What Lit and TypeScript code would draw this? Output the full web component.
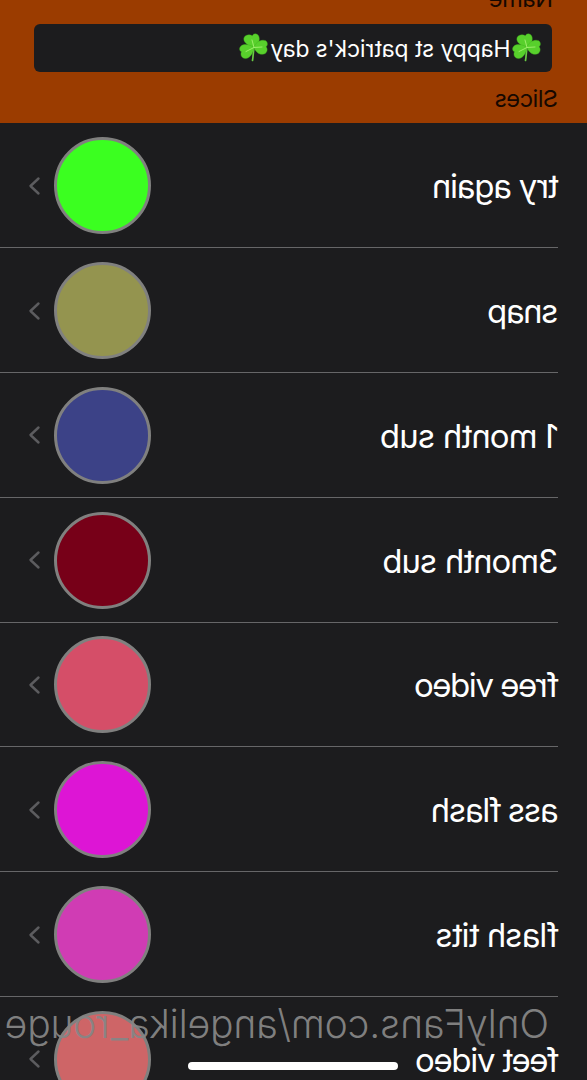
import { LitElement, html, css } from "lit";
import { customElement, property } from "lit/decorators.js";

interface Slice { label: string; color: string; spacing: number; }

const SLICES: Slice[] = [
  { label: "try again", color: "#3bff20", spacing: -1.2 },
  { label: "snap", color: "#94944f", spacing: -1.4 },
  { label: "1 month sub", color: "#3c4287", spacing: -0.9 },
  { label: "3month sub", color: "#770018", spacing: -1 },
  { label: "free video", color: "#d54e68", spacing: -1.45 },
  { label: "ass flash", color: "#dd15d5", spacing: -1.3 },
  { label: "flash tits", color: "#d03cb4", spacing: -0.95 },
  { label: "feet video", color: "#ce6567", spacing: -1.35 },
];

@customElement("shamrock-icon")
class ShamrockIcon extends LitElement {
  static styles = css`
    :host { display: block; width: 29px; height: 29px; flex: none; }
    svg { display: block; width: 100%; height: 100%; }
  `;
  render() {
    return html`<svg viewBox="0 0 29 29">
      <path d="M14 14.5C14.8 19 14.7 23 15.500 27.500" fill="none" stroke="#6acb45" stroke-width="1.700" stroke-linecap="round"/>
      <g fill="#58d02c" stroke="#3fb01e" stroke-width=".4">
        <path d="M14 14.500C10 12.500 7.500 7 9.300 3C11 .1 14.500 0 15.700 2.800C18 1.200 22.500 1.500 24 4.800C25.300 9.500 19.500 13 14 14.500Z"/>
        <path d="M14 14.500C12.500 8.500 6 6 2.200 7.800C0 9.500 .2 12.500 2 13.800C-.2 16 .8 20 4 21C8.500 22.300 12.500 19 14 14.500Z"/>
        <path d="M14 14.500C17.500 11.500 24 10.500 27 13C29.200 15 28.700 18 26.500 18.800C28 21.500 26.500 25.500 22.700 25.600C17.500 25.500 14.500 19 14 14.500Z"/>
      </g>
      <path d="M14 14.500L16 7M14 14.500L6 14M14 14.500L22 18.500" stroke="#a4f070" stroke-width=".9" fill="none" stroke-linecap="round"/>
    </svg>`;
  }
}

@customElement("slice-row")
class SliceRow extends LitElement {
  @property({ attribute: false }) slice!: Slice;
  static styles = css`
    :host { display: flex; height: 124.8px; box-sizing: border-box; margin-left: 28.500px; padding: 1px 27.500px 0 0; border-bottom: 1px solid #666668; align-items: center; flex: none; }
    .label { flex: 1; font-size: 33px; line-height: 40px; padding-top: 1px; white-space: nowrap; }
    .swatch { width: 97px; height: 97px; box-sizing: border-box; border: 3px solid #80807f; border-radius: 50%; margin-right: 13px; }
    .chevron { display: block; width: 14px; height: 20px; }
  `;
  render() {
    return html`<span class="label" style="letter-spacing:${this.slice.spacing}px">${this.slice.label}</span>
      <span class="swatch" style="background:${this.slice.color}"></span>
      <svg class="chevron" viewBox="0 0 14 20"><path d="M2.500 2.500L10.500 10L2.500 17.500" fill="none" stroke="#5c5c5f" stroke-width="2.400" stroke-linecap="round" stroke-linejoin="round"/></svg>`;
  }
}

@customElement("app-root")
class AppRoot extends LitElement {
  static styles = css`
    :host { display: flex; flex-direction: column; position: relative; width: 587px; height: 1080px; overflow: hidden; background: #1c1c1e; color: #fff; font-family: Inter, "Liberation Sans", sans-serif; transform: scaleX(-1); }
    .header { height: 123.400px; flex: none; box-sizing: border-box; background: #9b3c00; color: #160800; font-size: 23.500px; line-height: 30px; overflow: hidden; }
    .name { margin: -16px 0 0 34px; height: 40px; letter-spacing: -.3px; }
    .field { display: flex; align-items: center; width: 518px; height: 47.500px; box-sizing: border-box; margin-left: 34.500px; padding-left: 11px; border-radius: 6px; background: #1c1c1e; color: #fff; gap: 2px; }
    .title { white-space: nowrap; font-size: 23px; letter-spacing: -.15px; padding-top: 2px; }
    .slices { margin: 12px 0 0 29px; letter-spacing: -.5px; }
    .watermark { position: absolute; left: 38px; top: 1001px; font: 300 39px/46px Inter, sans-serif; letter-spacing: -.17px; white-space: nowrap; color: rgba(134, 134, 134, .95); }
    .home { position: absolute; left: 189px; top: 1062px; width: 209.500px; height: 7.500px; border-radius: 4px; background: #fff; }
  `;
  render() {
    return html`
      <div class="header">
        <div class="name">Name</div>
        <div class="field"><shamrock-icon></shamrock-icon><span class="title">Happy st patrick's day</span><shamrock-icon></shamrock-icon></div>
        <div class="slices">Slices</div>
      </div>
      ${SLICES.map((s) => html`<slice-row .slice=${s}></slice-row>`)}
      <div class="watermark">OnlyFans.com/angelika_rouge</div>
      <div class="home"></div>`;
  }
}
